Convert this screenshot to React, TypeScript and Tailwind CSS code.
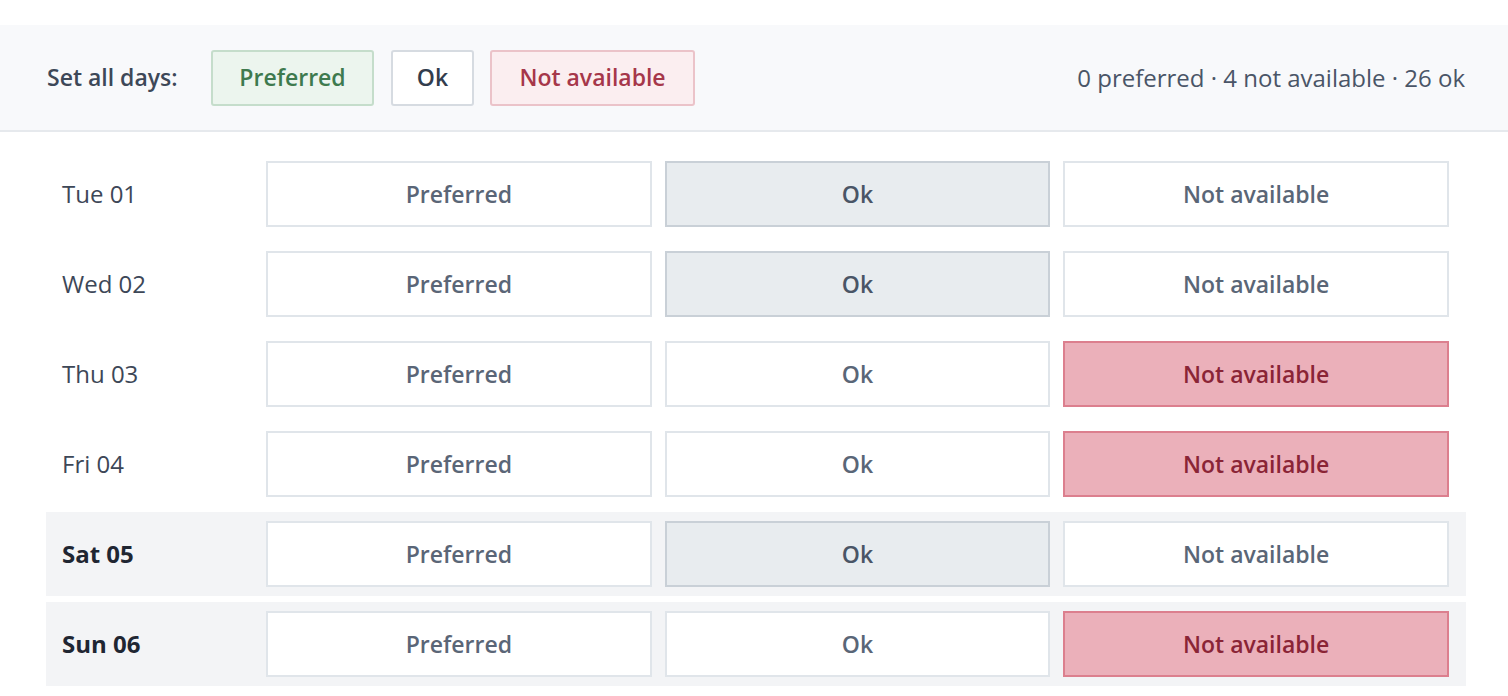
const font = { fontFamily: '"Open Sans", Roboto, sans-serif' };

type Choice = "preferred" | "ok" | "na";

const days: { label: string; value: Choice; weekend?: boolean }[] = [
  { label: "Tue 01", value: "ok" },
  { label: "Wed 02", value: "ok" },
  { label: "Thu 03", value: "na" },
  { label: "Fri 04", value: "na" },
  { label: "Sat 05", value: "ok", weekend: true },
  { label: "Sun 06", value: "na", weekend: true },
];

function Option({ kind, active, children }: { kind: Choice; active: boolean; children: React.ReactNode }) {
  let cls = "border-[#e0e5ea] bg-white text-[#5a6677]";
  if (active && kind === "ok") cls = "border-[#c9d0d7] bg-[#e8ecef] text-[#4a5566]";
  if (active && kind === "na") cls = "border-[#dc7f8e] bg-[#ebb0ba] text-[#8a2436]";
  if (active && kind === "preferred") cls = "border-[#8fc29d] bg-[#cfe8d5] text-[#2f6a3f]";
  return (
    <button className={`h-[66px] border-2 text-[23px] font-semibold ${cls}`}>{children}</button>
  );
}

export default function App() {
  return (
    <div className="min-h-screen bg-white pt-[25px]" style={font}>
      <div className="flex h-[107px] items-center justify-between border-b-2 border-[#e6e9ed] bg-[#f8f9fb] pl-[47px] pr-[43px]">
        <div className="flex items-center">
          <span className="w-[164px] text-[23px] font-semibold text-[#3d4858]">Set all days:</span>
          <button className="mr-[17px] h-[56px] w-[163px] rounded-[3px] border-2 border-[#c5ddcb] bg-[#ecf5ee] text-[23px] font-semibold text-[#3e7a4e]">
            Preferred
          </button>
          <button className="mr-[16px] h-[56px] w-[83px] rounded-[3px] border-2 border-[#d6dbe1] bg-white text-[23px] font-semibold text-[#323d4d]">
            Ok
          </button>
          <button className="h-[56px] w-[205px] rounded-[3px] border-2 border-[#ebc3c9] bg-[#fbeef0] text-[23px] font-semibold text-[#a6374a]">
            Not available
          </button>
        </div>
        <span className="text-[24px] text-[#4a5567]">0 preferred · 4 not available · 26 ok</span>
      </div>

      <div className="ml-[46px] mr-[42px] mt-[20px] flex flex-col gap-[6px]">
        {days.map((d) => (
          <div
            key={d.label}
            className={`grid h-[84px] grid-cols-[191px_1fr_1fr_1fr] items-center gap-[13px] pl-[16px] pr-[17px] ${
              d.weekend ? "bg-[#f3f4f6]" : ""
            }`}
          >
            <span
              className={`text-[24px] ${d.weekend ? "font-bold text-[#1f2632]" : "font-medium text-[#3d4757]"}`}
            >
              {d.label}
            </span>
            <Option kind="preferred" active={d.value === "preferred"}>Preferred</Option>
            <Option kind="ok" active={d.value === "ok"}>Ok</Option>
            <Option kind="na" active={d.value === "na"}>Not available</Option>
          </div>
        ))}
      </div>
    </div>
  );
}
